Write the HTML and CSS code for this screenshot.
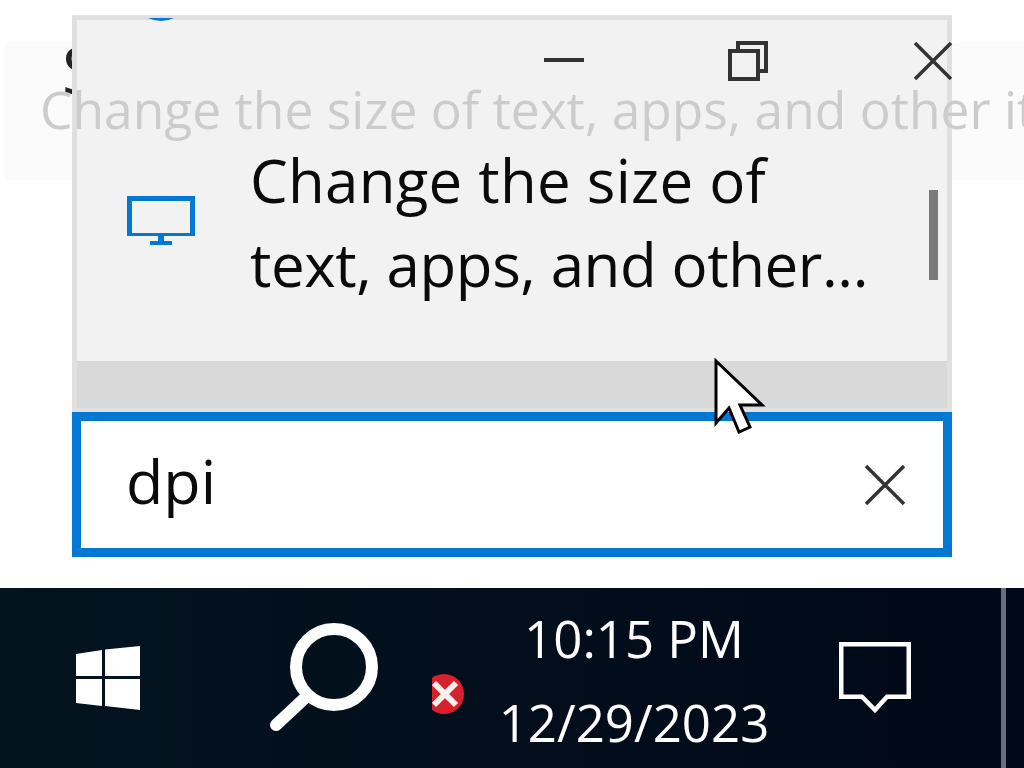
FILE: index.html
```html
<!DOCTYPE html>
<html>

<head>
    <meta charset="utf-8">
    <title>Search</title>
    <link rel="stylesheet" href="styles.css">
</head>

<body>
    <div class="screen">
        <div class="backdrop">
            <span class="backdrop-letter">S</span>
        </div>

        <div class="desktop">
            <div class="flyout">
                <svg class="top-arc" width="26" height="4" viewBox="0 0 26 4">
                    <path d="M0 0H26Q13 6 0 0Z" fill="#0078d4" />
                </svg>
                <div class="titlebar">
                    <svg class="ctl ctl-min" width="40" height="40" viewBox="0 0 40 40">
                        <path d="M0 19H40" stroke="#333" stroke-width="4" />
                    </svg>
                    <svg class="ctl ctl-max" width="40" height="40" viewBox="0 0 40 40">
                        <path d="M2 10H30V38H2ZM10 10V2H38V30H30" fill="none" stroke="#333" stroke-width="4" />
                    </svg>
                    <svg class="ctl ctl-close" width="40" height="40" viewBox="0 0 40 40">
                        <path d="M2 2L38 38M38 2L2 38" fill="none" stroke="#333" stroke-width="3.5" />
                    </svg>
                </div>
                <div class="result">
                    <svg class="monitor" width="68" height="50" viewBox="0 0 68 50">
                        <path d="M0 0H68V40H0ZM5 5V37H63V5Z" fill="#0078d4" fill-rule="evenodd" />
                        <path d="M31 40H37V45H45V49H23V45H31Z" fill="#0078d4" />
                    </svg>
                    <p class="result-text">
                        <span class="line-one">Change the size of</span>
                        <span class="line-two">text, apps, and other...</span>
                    </p>
                    <div class="scrollbar"></div>
                </div>
                <div class="flyout-footer"></div>
            </div>

            <div class="searchbox">
                <span class="query">dpi</span>
                <svg width="42" height="42" viewBox="0 0 42 42">
                    <path d="M2 2L40 40M40 2L2 40" fill="none" stroke="#333" stroke-width="3.5" />
                </svg>
            </div>
        </div>

        <div class="taskbar">
            <svg class="start" width="64" height="64" viewBox="0 0 64 64">
                <path d="M0 8L26 4V30H0ZM29 3.500L64 0V30H29ZM0 33H26V60L0 57ZM29 33H64V64L29 60Z" fill="#fff" />
            </svg>
            <svg class="magnifier" width="112" height="110" viewBox="0 0 112 110">
                <circle cx="66" cy="46" r="38" fill="none" stroke="#fff" stroke-width="12" />
                <path d="M38 76L8 104" stroke="#fff" stroke-width="12" stroke-linecap="round" />
            </svg>
            <svg class="tray-error" width="34" height="42" viewBox="0 0 34 42">
                <circle cx="12" cy="21" r="20" fill="#d9202e" />
                <path d="M2 10L24 32M24 10L2 32" stroke="#fdf3ea" stroke-width="6" />
            </svg>
            <div class="clock">
                <span>10:15 PM</span>
                <span>12/29/2023</span>
            </div>
            <svg class="notify" width="76" height="76" viewBox="0 0 76 76">
                <path d="M4.250 4.250H71.750V56.750H50L38 70L25 56.750H4.250Z" fill="none" stroke="#fff" stroke-width="4.500" />
            </svg>
            <div class="show-desktop"></div>
        </div>

        <div class="ghost-text">Change the size of text, apps, and other items</div>

        <svg class="cursor" width="52" height="78" viewBox="0 0 52 78">
            <path d="M2 3L48 47H26L36 69L25 74L15 50L2 65Z" fill="#fff" stroke="#000" stroke-width="3" />
        </svg>
    </div>
</body>

</html>
```
FILE: styles.css
```css
html, body {
    margin: 0;
    padding: 0;
    background: #fff;
}

.screen {
    position: relative;
    width: 1024px;
    height: 768px;
    overflow: hidden;
    font-family: "Open Sans", "Noto Sans", sans-serif;
    display: flex;
    flex-direction: column;
}

/* faint settings panel behind the flyout */
.backdrop {
    position: absolute;
    left: 5px;
    right: 0;
    top: 42px;
    height: 138px;
    background: #fbfbfb;
}

.backdrop-letter {
    position: absolute;
    left: 57px;
    top: -19px;
    font-size: 66px;
    color: #222;
}

.desktop {
    position: relative;
    height: 588px;
    box-sizing: border-box;
    padding: 15px 72px 31px;
    display: flex;
    flex-direction: column;
}

.flyout {
    position: relative;
    height: 397px;
    box-sizing: border-box;
    border: 5px solid #e0e0e0;
    border-bottom-width: 4px;
    background: #f2f2f2;
    display: flex;
    flex-direction: column;
}

.top-arc {
    position: absolute;
    left: 71px;
    top: -2px;
}

.titlebar {
    height: 111px;
    flex-shrink: 0;
    position: relative;
}

.ctl {
    position: absolute;
    top: 21px;
}

.ctl-min {
    left: 467px;
}

.ctl-max {
    left: 651px;
}

.ctl-close {
    left: 836px;
}

.result {
    flex: 1;
    display: flex;
    align-items: flex-start;
    padding-left: 50px;
    position: relative;
}

.monitor {
    margin-top: 65px;
    flex-shrink: 0;
}

.result-text {
    margin: 0 0 0 55px;
    padding-top: 7px;
    font-size: 60px;
    line-height: 84px;
    color: #0a0a0a;
    white-space: nowrap;
}

.line-one,
.line-two {
    display: block;
}

.line-one {
    letter-spacing: 0.25px;
}

.line-two {
    letter-spacing: -0.4px;
}

.scrollbar {
    position: absolute;
    left: 852px;
    top: 59px;
    width: 9px;
    height: 90px;
    background: #7a7a7a;
}

.flyout-footer {
    height: 47px;
    flex-shrink: 0;
    background: #d9d9d9;
}

.searchbox {
    height: 145px;
    box-sizing: border-box;
    border: 9px solid #0078d4;
    background: #fff;
    display: flex;
    align-items: center;
    justify-content: space-between;
    padding: 0 37px 0 45px;
}

.query {
    font-size: 61px;
    line-height: 84px;
    margin-top: -8px;
    color: #0a0a0a;
}

.taskbar {
    position: relative;
    height: 180px;
    background: linear-gradient(90deg, #03141f, #010818);
}

.taskbar > * {
    position: absolute;
}

.start {
    left: 76px;
    top: 58px;
}

.magnifier {
    left: 268px;
    top: 33px;
}

.tray-error {
    left: 432px;
    top: 85px;
}

.clock {
    left: 484px;
    top: 8px;
    width: 300px;
    display: flex;
    flex-direction: column;
    align-items: center;
    font-size: 51px;
    line-height: 84px;
    color: #fff;
}

.notify {
    left: 837px;
    top: 52px;
}

.show-desktop {
    left: 1001px;
    top: 0;
    width: 5px;
    height: 180px;
    background: #6a6e7a;
}

/* tooltip fading in over everything */
.ghost-text {
    position: absolute;
    left: 40px;
    top: 74px;
    font-size: 51.5px;
    line-height: 70px;
    color: #ccc;
    white-space: nowrap;
}

.cursor {
    position: absolute;
    left: 714px;
    top: 358px;
}
```
